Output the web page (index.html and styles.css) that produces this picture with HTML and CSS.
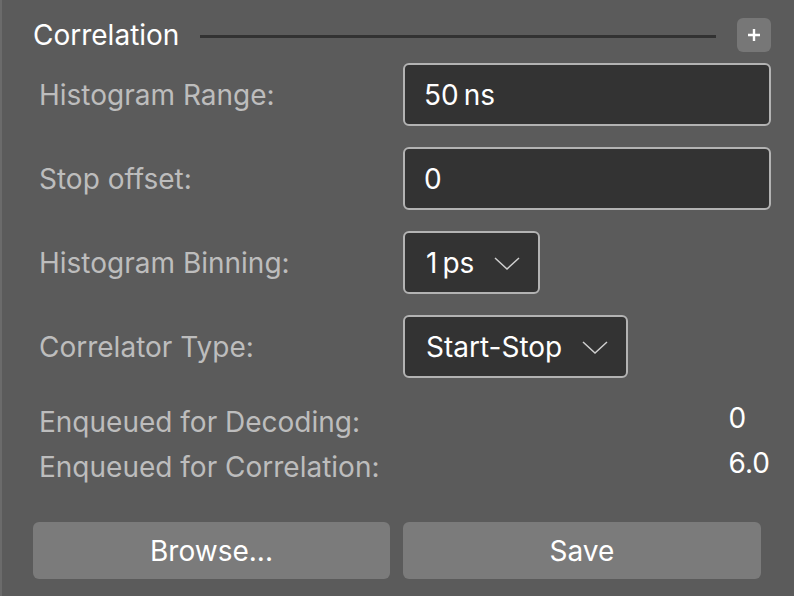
FILE: index.html
```html
<!DOCTYPE html>
<html lang="en">
<head>
<meta charset="utf-8">
<title>Correlation</title>
<link rel="stylesheet" href="styles.css">
</head>
<body>
<div class="panel">
  <div class="header">
    <h2 class="title">Correlation</h2>
    <div class="rule"></div>
    <button class="add" type="button" aria-label="Add">
      <svg width="14" height="14" viewBox="0 0 14 14"><path d="M7 1v12M1 7h12" stroke="#fff" stroke-width="2.4" fill="none"/></svg>
    </button>
  </div>

  <div class="form">
    <div class="label">Histogram Range:</div>
    <div class="field field-wide">50&#8201;ns</div>

    <div class="label">Stop offset:</div>
    <div class="field field-wide">0</div>

    <div class="label">Histogram Binning:</div>
    <div class="field field-select">
      <span>1&#8201;ps</span>
      <svg class="chev" width="26" height="13" viewBox="0 0 26 13"><path d="M1 1l12 11L25 1" stroke="#cfcfcf" stroke-width="1.5" fill="none"/></svg>
    </div>

    <div class="label">Correlator Type:</div>
    <div class="field field-select">
      <span>Start-Stop</span>
      <svg class="chev" width="26" height="13" viewBox="0 0 26 13"><path d="M1 1l12 11L25 1" stroke="#cfcfcf" stroke-width="1.5" fill="none"/></svg>
    </div>
  </div>

  <div class="stats">
    <div class="stat-label">Enqueued for Decoding:</div>
    <div class="stat-value">0</div>
    <div class="stat-label">Enqueued for Correlation:</div>
    <div class="stat-value">6.0</div>
  </div>

  <div class="actions">
    <button class="btn" type="button">Browse...</button>
    <button class="btn" type="button">Save</button>
  </div>
</div>
</body>
</html>
```
FILE: styles.css
```css
* { box-sizing: border-box; }

html, body {
  margin: 0;
  height: 100%;
}

body {
  background: #5b5b5b;
  font-family: Inter, "Noto Sans", sans-serif;
  color: #fff;
  overflow: hidden;
}

.panel {
  height: 596px;
  border-left: 2px solid #6b6b6b;
  padding: 18px 23px 0 31px;
}

/* section header: title, divider line, add button */
.header {
  display: flex;
  align-items: center;
  height: 34px;
}

.title {
  margin: 0;
  font-size: 28px;
  font-weight: 400;
  color: #fff;
  line-height: 34px;
}

.rule {
  flex: 1;
  height: 3px;
  background: #323232;
  margin: 2px 21px 0 21px;
}

.add {
  width: 34px;
  height: 34px;
  border: none;
  border-radius: 6px;
  background: #777;
  display: flex;
  align-items: center;
  justify-content: center;
  padding: 0;
}

/* label / control rows */
.form {
  display: grid;
  grid-template-columns: 370px 368px;
  grid-auto-rows: 63px;
  row-gap: 21px;
  margin-top: 11px;
}

.label {
  padding-left: 6px;
  display: flex;
  align-items: center;
  font-size: 28px;
  color: #bdbdbd;
}

.field {
  border: 2px solid #b3b3b3;
  border-radius: 6px;
  background: #333;
  font-size: 28px;
  color: #fff;
  display: flex;
  align-items: center;
  padding-left: 21px;
}

.field-wide { padding-left: 19px; }

.field-select {
  justify-self: start;
  padding-right: 18px;
  gap: 20px;
}

.chev { display: block; margin-top: 2px; }

/* queue counters */
.stats {
  display: grid;
  grid-template-columns: 1fr auto;
  margin-top: 22px;
  padding: 0 1px 0 6px;
  font-size: 28px;
}

.stat-label {
  color: #bdbdbd;
  line-height: 45px;
}

.stat-value {
  color: #fff;
  line-height: 36px;
  align-self: start;
}

/* bottom buttons */
.actions {
  display: grid;
  grid-template-columns: 357px 358px;
  column-gap: 13px;
  margin-top: 32px;
}

.btn {
  height: 57px;
  border: none;
  border-radius: 6px;
  background: #7b7b7b;
  color: #fff;
  font-family: inherit;
  font-size: 28px;
  padding: 0;
}
```
